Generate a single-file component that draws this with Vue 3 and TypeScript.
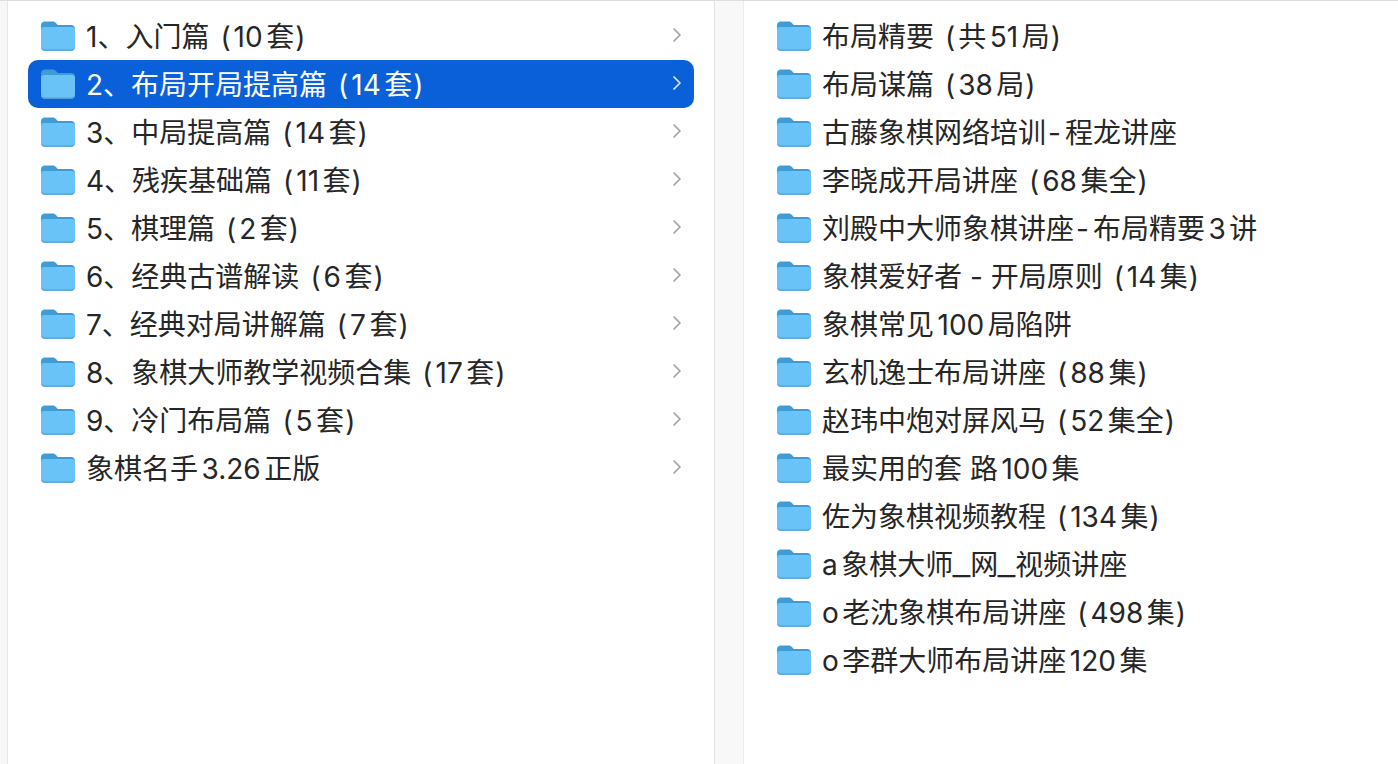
<script setup lang="ts">
interface Part {
  text: string
  kind: string
}

const left: string[] = [
  '1、入门篇(10套)',
  '2、布局开局提高篇(14套)',
  '3、中局提高篇(14套)',
  '4、残疾基础篇(11套)',
  '5、棋理篇(2套)',
  '6、经典古谱解读(6套)',
  '7、经典对局讲解篇(7套)',
  '8、象棋大师教学视频合集(17套)',
  '9、冷门布局篇(5套)',
  '象棋名手3.26正版',
]
const right: string[] = [
  '布局精要(共51局)',
  '布局谋篇(38局)',
  '古藤象棋网络培训-程龙讲座',
  '李晓成开局讲座(68集全)',
  '刘殿中大师象棋讲座-布局精要3讲',
  '象棋爱好者 - 开局原则(14集)',
  '象棋常见100局陷阱',
  '玄机逸士布局讲座(88集)',
  '赵玮中炮对屏风马(52集全)',
  '最实用的套 路100集',
  '佐为象棋视频教程(134集)',
  'a象棋大师_网_视频讲座',
  'o老沈象棋布局讲座(498集)',
  'o李群大师布局讲座120集',
]
const selected = 1

function parts(name: string): Part[] {
  return name
    .split(/([()_]|[^\s]-[^\s])/)
    .filter((s) => s !== '')
    .flatMap((s): Part[] => {
      if (s === '(') return [{ text: s, kind: 'open' }]
      if (s === ')') return [{ text: s, kind: 'close' }]
      if (s === '_') return [{ text: s, kind: 'under' }]
      if (s.length === 3 && s[1] === '-') {
        return [
          { text: s[0], kind: '' },
          { text: '-', kind: 'dash' },
          { text: s[2], kind: '' },
        ]
      }
      return [{ text: s, kind: '' }]
    })
}
</script>

<template>
  <div class="finder">
    <div class="gutter"></div>
    <ul class="pane pane-left">
      <li v-for="(name, i) in left" :key="name" class="row" :class="{ active: i === selected }">
        <svg class="folder" viewBox="0 0 34 30" width="34" height="30">
          <path d="M0 4.5C0 2 1.6.5 4 .5h7.5c1.6 0 2.4.5 3.5 1.6L16.800 4H30c2.500 0 4 1.500 4 4v6H0z" fill="#3f9bd3" />
          <path d="M0 8.700C0 7 1.200 6 3 6h28c1.800 0 3 1 3 2.700V26c0 2.400-1.500 3.800-3.800 3.800H3.800C1.500 29.800 0 28.400 0 26z" fill="#69c3f6" />
          <path d="M0 26c0 2.400 1.500 3.800 3.800 3.800h26.400c2.300 0 3.800-1.400 3.800-3.800v-.9c0 2-1.400 3.300-3.400 3.300H3.400c-2 0-3.400-1.300-3.400-3.300z" fill="#4f9fd0" />
        </svg>
        <span class="name"><span v-for="(p, j) in parts(name)" :key="j" :class="p.kind">{{ p.text }}</span></span>
        <svg class="chev" viewBox="0 0 10 16" width="10" height="16">
          <path d="M2 2l6 6-6 6" fill="none" stroke="currentColor" stroke-width="1.700" stroke-linecap="round" stroke-linejoin="round" />
        </svg>
      </li>
    </ul>
    <div class="divider"></div>
    <ul class="pane pane-right">
      <li v-for="name in right" :key="name" class="row">
        <svg class="folder" viewBox="0 0 34 30" width="34" height="30">
          <path d="M0 4.5C0 2 1.6.5 4 .5h7.5c1.6 0 2.4.5 3.5 1.6L16.800 4H30c2.500 0 4 1.500 4 4v6H0z" fill="#3f9bd3" />
          <path d="M0 8.700C0 7 1.200 6 3 6h28c1.800 0 3 1 3 2.700V26c0 2.400-1.500 3.800-3.800 3.800H3.800C1.500 29.800 0 28.400 0 26z" fill="#69c3f6" />
          <path d="M0 26c0 2.400 1.500 3.800 3.800 3.800h26.400c2.300 0 3.800-1.400 3.800-3.800v-.9c0 2-1.400 3.300-3.400 3.300H3.400c-2 0-3.400-1.300-3.400-3.300z" fill="#4f9fd0" />
        </svg>
        <span class="name"><span v-for="(p, j) in parts(name)" :key="j" :class="p.kind">{{ p.text }}</span></span>
      </li>
    </ul>
  </div>
</template>

<style>
html, body { margin: 0; background: #fff; overflow: hidden; }
</style>

<style scoped>
.finder {
  display: flex;
  width: 1398px;
  height: 764px;
  border-top: 1px solid #dedede;
  box-sizing: border-box;
  background: #fff;
  font-family: Inter, "Noto Sans CJK SC", sans-serif;
  overflow: hidden;
}
.gutter {
  width: 7px;
  background: #f7f7f7;
  border-right: 1px solid #e6e6e6;
}
.divider {
  width: 28px;
  background: #f8f8f8;
  border-left: 1px solid #e2e2e2;
  border-right: 1px solid #ececec;
}
.pane {
  list-style: none;
  margin: 0;
  padding: 11px 0 0;
}
.pane-left {
  width: 706px;
  padding-left: 20px;
  padding-right: 20px;
  box-sizing: border-box;
}
.pane-right {
  flex: 1;
  padding-left: 20px;
}
.row {
  display: flex;
  align-items: center;
  height: 48px;
  padding-left: 13px;
  border-radius: 10px;
  color: #262626;
  font-size: 28px;
  white-space: pre;
  text-autospace: normal;
}
.folder {
  flex: none;
  margin-right: 11px;
}
.name {
  flex: 1;
  min-width: 0;
  padding-bottom: 3px;
}
.open {
  margin-left: 11px;
  margin-right: 3px;
}
.close {
  margin-left: 1px;
}
.dash {
  margin: 0 4px 0 2px;
}
.under {
  display: inline-block;
  width: 17px;
  text-align: center;
  transform: scaleX(1.4);
}
.chev {
  flex: none;
  margin-right: 12px;
  margin-bottom: 3px;
  color: #a3a3a3;
}
.active {
  background: #0a60d9;
  color: #fff;
}
.active .chev {
  color: #dce9fb;
}
</style>
